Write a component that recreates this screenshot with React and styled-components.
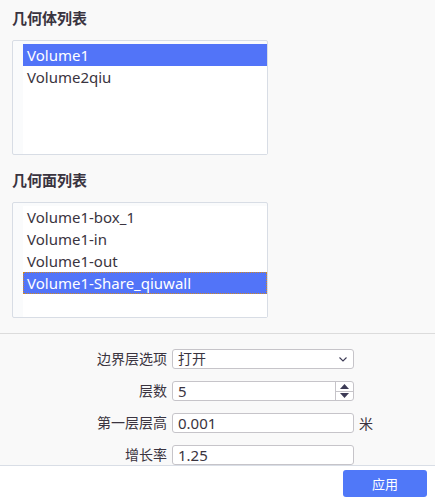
import React from "react";
import styled, { createGlobalStyle } from "styled-components";

const GlobalStyle = createGlobalStyle`
  html, body {
    margin: 0;
    padding: 0;
    background: #ffffff;
  }
  body {
    font-family: "Noto Sans", "Noto Sans CJK SC", sans-serif;
    color: #333;
  }
`;

const volumes = ["Volume1", "Volume2qiu"];
const faces = ["Volume1-box_1", "Volume1-in", "Volume1-out", "Volume1-Share_qiuwall"];

const Page = styled.div`
  height: 100vh;
  display: flex;
  flex-direction: column;
`;

const Content = styled.div`
  flex: 1;
  overflow: hidden;
  background: #f9f9f9;
`;

const Lists = styled.section`
  padding: 8px 12px 15px;
  border-bottom: 1px solid #dcdcdc;
`;

const Title = styled.h3`
  margin: ${(p) => (p.$first ? "0" : "15px")} 0 12px;
  font-size: 15px;
  font-weight: 700;
  line-height: 20px;
  color: #3a3440;
`;

const ListBox = styled.div`
  width: 256px;
  height: ${(p) => p.$h}px;
  border: 1px solid #d8dde5;
  border-radius: 2px;
  background: #fafbfc;
  padding: 3px 0 0 10px;
  box-sizing: border-box;
  display: flex;
`;

const ListInner = styled.ul`
  flex: 1;
  margin: 0;
  padding: 0;
  list-style: none;
  background: #fff;
`;

const Item = styled.li`
  height: 22px;
  line-height: 22px;
  padding-left: 4px;
  font-size: 15px;
  color: ${(p) => (p.$selected ? "#fff" : "#3a3440")};
  background: ${(p) => (p.$selected ? "#5274f8" : "transparent")};
  outline: ${(p) => (p.$focus ? "1px dotted #d4891f" : "none")};
  outline-offset: -1px;
  white-space: nowrap;
`;

const Form = styled.div`
  display: grid;
  grid-template-columns: 167px 182px 1fr;
  column-gap: 5px;
  row-gap: 12px;
  padding-top: 15px;
  align-items: center;
`;

const Label = styled.label`
  justify-self: end;
  font-size: 14px;
  color: #3a3440;
  line-height: 20px;
`;

const Field = styled.div`
  height: 20px;
  border: 1px solid #c6c4c9;
  border-radius: 3px;
  background: #fff;
  box-sizing: border-box;
  display: flex;
  align-items: center;
  font-size: 15px;
  color: #3a3440;
`;

const Value = styled.span`
  flex: 1;
  padding-left: 5px;
  line-height: 18px;
  font-size: ${(p) => (p.$cjk ? "14px" : "15px")};
`;

const Chevron = styled.svg`
  width: 8px;
  height: 5px;
  margin-right: 6px;
`;

const Spinner = styled.div`
  width: 17px;
  align-self: stretch;
  border-left: 1px solid #c6c4c9;
  display: flex;
  flex-direction: column;
`;

const SpinHalf = styled.div`
  flex: 1;
  display: flex;
  align-items: center;
  justify-content: center;
  & + & {
    border-top: 1px solid #c6c4c9;
  }
`;

const Unit = styled.span`
  font-size: 14px;
  color: #3a3440;
`;

const Footer = styled.footer`
  height: 34px;
  border-top: 1px solid #d9dee6;
  background: #fff;
  box-sizing: border-box;
  display: flex;
  justify-content: flex-end;
  align-items: flex-start;
  padding: 4px 8px 0 0;
`;

const ApplyButton = styled.button`
  width: 84px;
  height: 27px;
  border: none;
  border-radius: 3px;
  background: #5078f8;
  color: #fff;
  font-family: inherit;
  font-size: 13px;
  cursor: pointer;
`;

const Tri = ({ up }) => (
  <svg width="9" height="5" viewBox="0 0 9 5">
    <path d={up ? "M0 5 L4.5 0 L9 5 Z" : "M0 0 L4.5 5 L9 0 Z"} fill="#3c3a55" />
  </svg>
);

export default function App() {
  return (
    <Page>
      <GlobalStyle />
      <Content>
        <Lists>
          <Title $first>几何体列表</Title>
          <ListBox $h={115}>
            <ListInner>
              {volumes.map((v, i) => (
                <Item key={v} $selected={i === 0}>{v}</Item>
              ))}
            </ListInner>
          </ListBox>
          <Title>几何面列表</Title>
          <ListBox $h={116}>
            <ListInner>
              {faces.map((f, i) => (
                <Item key={f} $selected={i === 3} $focus={i === 3}>{f}</Item>
              ))}
            </ListInner>
          </ListBox>
        </Lists>
        <Form>
          <Label>边界层选项</Label>
          <Field>
            <Value $cjk>打开</Value>
            <Chevron viewBox="0 0 8 5">
              <path d="M0.5 0.5 L4 4 L7.5 0.5" fill="none" stroke="#3c3a55" strokeWidth="1.1" />
            </Chevron>
          </Field>
          <span />
          <Label>层数</Label>
          <Field>
            <Value>5</Value>
            <Spinner>
              <SpinHalf><Tri up /></SpinHalf>
              <SpinHalf><Tri /></SpinHalf>
            </Spinner>
          </Field>
          <span />
          <Label>第一层层高</Label>
          <Field>
            <Value>0.001</Value>
          </Field>
          <Unit>米</Unit>
          <Label>增长率</Label>
          <Field>
            <Value>1.25</Value>
          </Field>
          <span />
        </Form>
      </Content>
      <Footer>
        <ApplyButton>应用</ApplyButton>
      </Footer>
    </Page>
  );
}
